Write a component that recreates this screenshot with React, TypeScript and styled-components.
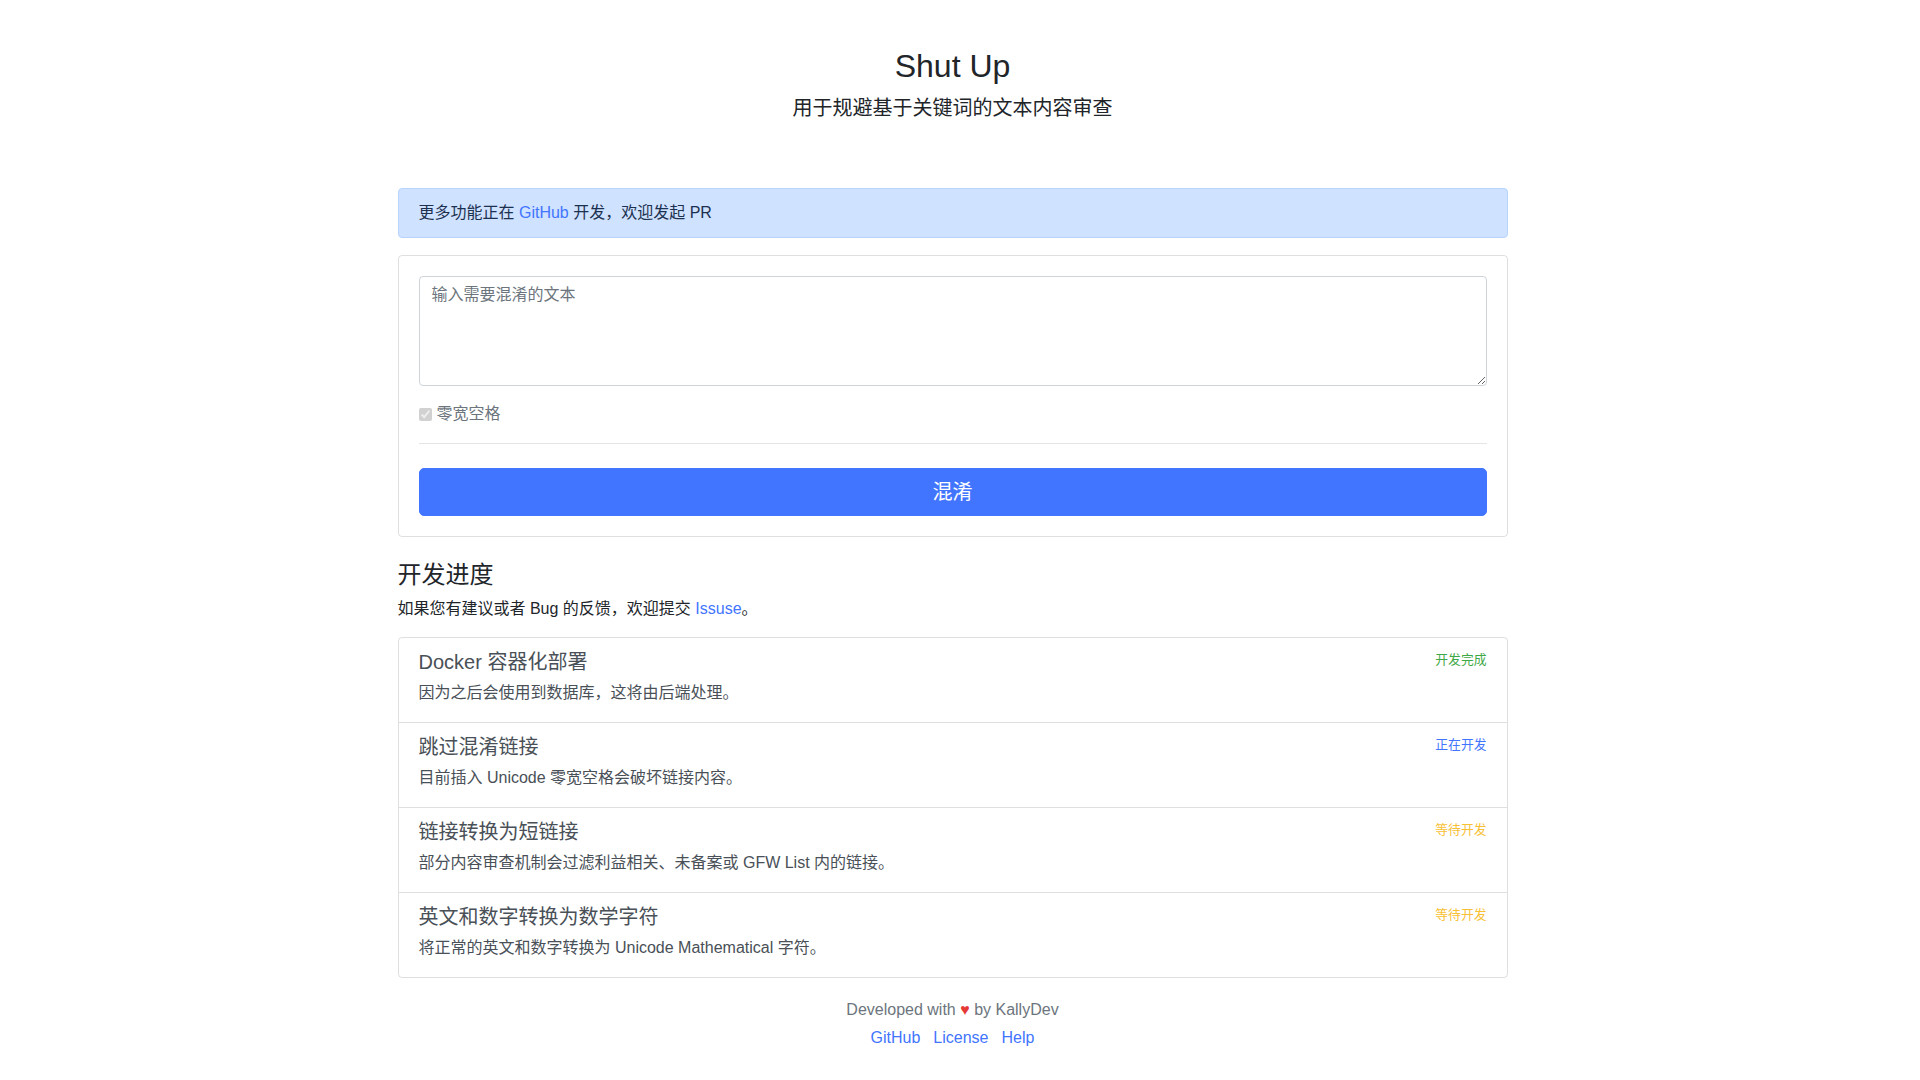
import React from 'react';
import styled, { createGlobalStyle } from 'styled-components';

const GlobalStyle = createGlobalStyle`
  html {
    overflow-y: scroll;
  }

  html, body {
    margin: 0;
    background: #fff;
  }

  body {
    padding: 0 15px 0 0;
    font-family: 'Liberation Sans', 'Noto Sans CJK SC', sans-serif;
    font-size: 16px;
    line-height: 1.5;
    color: #212529;
  }

  * {
    box-sizing: border-box;
  }
`;

const Container = styled.div`
  width: 1110px;
  margin: 0 auto;
  padding-bottom: 37px;
`;

const Header = styled.header`
  padding-top: 47px;
  margin-bottom: 65px;
  text-align: center;
`;

const Title = styled.h1`
  margin: 0 0 8px;
  font-size: 32px;
  font-weight: 400;
  line-height: 1.2;
  color: #212529;
`;

const Lead = styled.p`
  margin: 0;
  font-size: 20px;
  line-height: 1.5;
  font-weight: 400;
`;

const Link = styled.a`
  color: #4275ff;
  text-decoration: none;
`;

const Alert = styled.div`
  padding: 12px 20px;
  margin-bottom: 17px;
  background: #cfe2ff;
  border: 1px solid #b6d4fe;
  border-radius: 4px;
  color: #1c3150;
`;

const Card = styled.div`
  padding: 20px;
  border: 1px solid rgba(0, 0, 0, 0.125);
  border-radius: 4px;
  margin-bottom: 24px;
`;

const TextArea = styled.textarea`
  display: block;
  width: 100%;
  height: 110px;
  padding: 6px 12px;
  font-family: inherit;
  font-size: 16px;
  line-height: 1.5;
  color: #495057;
  border: 1px solid #ced4da;
  border-radius: 4px;
  outline: none;

  &::placeholder {
    color: #6c757d;
  }
`;

const CheckRow = styled.label`
  display: flex;
  align-items: center;
  height: 24px;
  margin-top: 16px;
  color: #6c757d;
`;

const CheckBox = styled.input`
  width: 13px;
  height: 13px;
  margin: 0 5px 0 0;
`;

const Divider = styled.hr`
  margin: 17px 0 24px;
  border: 0;
  border-top: 1px solid rgba(0, 0, 0, 0.1);
`;

const Button = styled.button`
  display: block;
  width: 100%;
  height: 48px;
  padding: 8px 16px;
  font-family: inherit;
  font-size: 20px;
  line-height: 1.5;
  color: #fff;
  background: #4275ff;
  border: 1px solid #4275ff;
  border-radius: 5px;
  cursor: pointer;
`;

const SectionTitle = styled.h4`
  margin: 0 0 7px;
  font-size: 24px;
  font-weight: 400;
  line-height: 1.2;
`;

const SectionText = styled.p`
  margin: 0 0 16px;
`;

const ListGroup = styled.ul`
  margin: 0;
  padding: 0;
  list-style: none;
  border: 1px solid rgba(0, 0, 0, 0.125);
  border-radius: 4px;
`;

const ListItem = styled.li`
  padding: 12px 20px 17px;
  color: #495057;

  & + & {
    border-top: 1px solid rgba(0, 0, 0, 0.125);
  }
`;

const ItemHead = styled.div`
  display: flex;
  justify-content: space-between;
  margin-bottom: 7px;
`;

const ItemTitle = styled.h5`
  margin: 0;
  font-size: 20px;
  font-weight: 400;
  line-height: 1.2;
`;

const Status = styled.small<{ $color: string }>`
  font-size: 12.8px;
  line-height: 1.5;
  color: ${({ $color }) => $color};
`;

const ItemText = styled.p`
  margin: 0;
`;

const Footer = styled.footer`
  margin-top: 20px;
  text-align: center;
  color: #6c757d;
`;

const Heart = styled.span`
  color: #e53935;
`;

const FooterLinks = styled.div`
  display: flex;
  justify-content: center;
  gap: 13px;
  margin-top: 4px;
`;

interface Task {
  title: string;
  text: string;
  status: string;
  color: string;
}

const tasks: Task[] = [
  {
    title: 'Docker 容器化部署',
    text: '因为之后会使用到数据库，这将由后端处理。',
    status: '开发完成',
    color: '#3fa846',
  },
  {
    title: '跳过混淆链接',
    text: '目前插入 Unicode 零宽空格会破坏链接内容。',
    status: '正在开发',
    color: '#4275ff',
  },
  {
    title: '链接转换为短链接',
    text: '部分内容审查机制会过滤利益相关、未备案或 GFW List 内的链接。',
    status: '等待开发',
    color: '#f8c035',
  },
  {
    title: '英文和数字转换为数学字符',
    text: '将正常的英文和数字转换为 Unicode Mathematical 字符。',
    status: '等待开发',
    color: '#f8c035',
  },
];

const App: React.FC = () => (
  <>
    <GlobalStyle />
    <Container>
      <Header>
        <Title>Shut Up</Title>
        <Lead>用于规避基于关键词的文本内容审查</Lead>
      </Header>

      <Alert>
        更多功能正在 <Link href="#">GitHub</Link> 开发，欢迎发起 PR
      </Alert>

      <Card>
        <TextArea placeholder="输入需要混淆的文本" />
        <CheckRow>
          <CheckBox type="checkbox" checked disabled readOnly />
          零宽空格
        </CheckRow>
        <Divider />
        <Button type="button">混淆</Button>
      </Card>

      <SectionTitle>开发进度</SectionTitle>
      <SectionText>
        如果您有建议或者 Bug 的反馈，欢迎提交 <Link href="#">Issuse</Link>。
      </SectionText>

      <ListGroup>
        {tasks.map((task) => (
          <ListItem key={task.title}>
            <ItemHead>
              <ItemTitle>{task.title}</ItemTitle>
              <Status $color={task.color}>{task.status}</Status>
            </ItemHead>
            <ItemText>{task.text}</ItemText>
          </ListItem>
        ))}
      </ListGroup>

      <Footer>
        <div>
          Developed with <Heart>♥</Heart> by KallyDev
        </div>
        <FooterLinks>
          <Link href="#">GitHub</Link>
          <Link href="#">License</Link>
          <Link href="#">Help</Link>
        </FooterLinks>
      </Footer>
    </Container>
  </>
);

export default App;
